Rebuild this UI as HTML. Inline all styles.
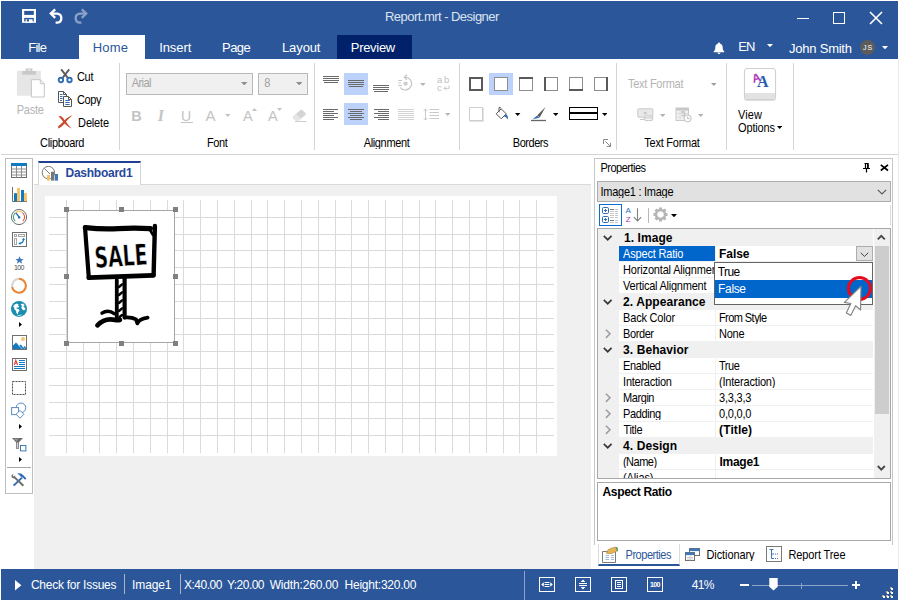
<!DOCTYPE html>
<html lang="en">
<head>
<meta charset="utf-8">
<title>Report.mrt - Designer</title>
<style>
*{box-sizing:border-box;margin:0;padding:0}
html,body{width:899px;height:601px;overflow:hidden;background:#fff}
body{position:relative;font-family:"Liberation Sans",sans-serif;font-size:11px;color:#000}
.abs,.abs-all *{position:absolute}
#app{position:absolute;left:0;top:0;width:899px;height:601px;overflow:hidden;background:#fff}
#app div,#app span,#app svg{position:absolute}
.t{white-space:nowrap;line-height:1}
/* title */
#title{left:1px;top:1px;width:897px;height:58px;background:#2b579a}
.tt{color:#fff;font-size:13px}
.tab{color:#fff;font-size:13px}
/* ribbon */
#ribbon{left:1px;top:59px;width:897px;height:95px;background:#fff}
.rl{font-size:11px;color:#000}
.dis{color:#ababab}
.sep{width:1px;background:#d2d2d2;top:63px;height:87px}
.hl{background:#c2d5f2}
/* workspace */
#work{left:1px;top:155px;width:897px;height:414px;background:#fff}
/* status */
#status{left:1px;top:569px;width:897px;height:31px;background:#2b579a}
.st{color:#fff;font-size:13px}
</style>
</head>
<body>
<div id="app">

<!-- ===== TITLE BAR ===== -->
<div id="title"></div>
<svg style="left:22px;top:9px" width="14" height="14" viewBox="0 0 14 14" ><rect width="14" height="13.8" fill="#fff"/><rect x="2.2" y="1.9" width="9.6" height="4" fill="#2b579a"/><rect x="2.2" y="8.9" width="9.6" height="3.5" fill="#2b579a"/><rect x="3.6" y="10.3" width="7" height="3.5" fill="#fff"/><rect x="4.8" y="10.3" width="2.2" height="2.2" fill="#2b579a"/></svg>
<svg style="left:48px;top:8px" width="16" height="16" viewBox="0 0 16 16" ><g fill="none" stroke="#fff" stroke-width="2.3"><path d="M7.2 1.4L2.8 5.6L7.2 9.8"/><path d="M3.4 5.6H9.4A4.6 4.6 0 0 1 9.4 14.7H7.6"/></g></svg>
<svg style="left:73px;top:8px" width="16" height="16" viewBox="0 0 16 16" ><g fill="none" stroke="#8ba1c8" stroke-width="2.3"><path d="M8.8 1.4L13.2 5.6L8.8 9.8"/><path d="M12.6 5.6H6.6A4.6 4.6 0 0 0 6.6 14.7H8.4"/></g></svg>
<span class="t " style="left:385.00px;top:10px;font-size:13px;letter-spacing:-0.534px;color:#dde3ee">Report.mrt - Designer</span>
<div style="left:797px;top:18px;width:12px;height:1px;background:#fff"></div>
<div style="left:833px;top:12px;width:12px;height:12px;border:1px solid #fff"></div>
<svg style="left:869px;top:11px" width="14" height="14" viewBox="0 0 14 14" ><path d="M1 1L13 13M13 1L1 13" stroke="#fff" stroke-width="1.6" fill="none"/></svg>
<span class="t " style="left:28.20px;top:41px;font-size:13px;letter-spacing:-0.718px;color:#fff">File</span>
<div style="left:79px;top:35px;width:66px;height:25px;background:#fff"></div>
<span class="t " style="left:92.80px;top:41px;font-size:13px;letter-spacing:0.171px;color:#2b579a">Home</span>
<span class="t " style="left:159.20px;top:41px;font-size:13px;letter-spacing:-0.083px;color:#fff">Insert</span>
<span class="t " style="left:222.00px;top:41px;font-size:13px;letter-spacing:-0.525px;color:#fff">Page</span>
<span class="t " style="left:282.00px;top:41px;font-size:13px;letter-spacing:-0.109px;color:#fff">Layout</span>
<div style="left:337px;top:35px;width:75px;height:24px;background:#01226a"></div>
<span class="t " style="left:350.80px;top:41px;font-size:13px;letter-spacing:-0.308px;color:#fff">Preview</span>
<svg style="left:713px;top:42px" width="12" height="13" viewBox="0 0 12 13" ><path fill="#fff" d="M6 0.6C6.7 0.6 7 1.1 7 1.6C9 2.2 9.7 3.8 9.7 5.6C9.7 7.6 10.3 8.8 11.3 9.6V10.2H0.7V9.6C1.7 8.8 2.3 7.6 2.3 5.6C2.3 3.8 3 2.2 5 1.6C5 1.1 5.3 0.6 6 0.6Z M4.6 10.8H7.4C7.4 11.6 6.8 12.1 6 12.1C5.2 12.1 4.6 11.6 4.6 10.8Z"/></svg>
<span class="t " style="left:738.30px;top:40px;font-size:13px;letter-spacing:-0.862px;color:#fff">EN</span>
<svg style="left:767px;top:44px" width="6" height="3.2" viewBox="0 0 6 3.2" ><path d="M0 0H6 L3 3.2Z" fill="#fff"/></svg>
<span class="t " style="left:789.10px;top:42px;font-size:13px;letter-spacing:-0.239px;color:#fff">John Smith</span>
<div style="left:860px;top:40px;width:15.2px;height:15.2px;background:#5c5c5c;border-radius:50%"></div>
<span class="t " style="left:862.90px;top:44px;font-size:7px;letter-spacing:1.228px;color:#fff">JS</span>
<svg style="left:881.5px;top:45.8px" width="6" height="3.4" viewBox="0 0 6 3.4" ><path d="M0 0H6 L3 3.4Z" fill="#fff"/></svg>

<!-- ===== RIBBON ===== -->
<div id="ribbon"></div>
<div style="left:1px;top:154px;width:897px;height:1px;background:#d4d4d4"></div>
<div style="left:119px;top:63px;width:1px;height:87px;background:#d5d5d5"></div>
<div style="left:314px;top:63px;width:1px;height:87px;background:#d5d5d5"></div>
<div style="left:459px;top:63px;width:1px;height:87px;background:#d5d5d5"></div>
<div style="left:616px;top:63px;width:1px;height:87px;background:#d5d5d5"></div>
<div style="left:726px;top:63px;width:1px;height:87px;background:#d5d5d5"></div>
<div style="left:793px;top:63px;width:1px;height:87px;background:#d5d5d5"></div>
<svg style="left:16px;top:68px" width="30" height="30" viewBox="0 0 30 30" ><rect x="0.9" y="2.7" width="24" height="25.1" rx="1" fill="#e6e6e6"/><path d="M6.2 3H19.9V6.8H6.2Z M9.7 0.4H16.4V3H9.7Z" fill="#c9c9c9"/><rect x="11.8" y="1.3" width="2.5" height="1.7" fill="#e6e6e6"/><path d="M15.4 11.7H24.3L28.3 15.7V29H15.4Z" fill="#fff" stroke="#c6c6c6" stroke-width="1"/><path d="M24.3 11.7V15.7H28.3" fill="none" stroke="#c6c6c6"/></svg>
<span class="t " style="left:16.80px;top:104px;font-size:11px;letter-spacing:-0.285px;transform:scaleY(1.08);transform-origin:0 1.12px;color:#b4b4b4">Paste</span>
<svg style="left:57px;top:68px" width="16" height="16" viewBox="0 0 16 16" ><path d="M4.2 1.4L11.4 10.6M12.2 1.4L5 10.6" stroke="#5c5c5c" stroke-width="1.9" fill="none"/><circle cx="3.9" cy="12" r="2.2" fill="#fff" stroke="#2f6db5" stroke-width="1.9"/><circle cx="12.5" cy="12" r="2.2" fill="#fff" stroke="#2f6db5" stroke-width="1.9"/></svg>
<span class="t " style="left:76.90px;top:71px;font-size:11px;letter-spacing:-0.263px;transform:scaleY(1.08);transform-origin:0 1.12px;">Cut</span>
<svg style="left:57px;top:90px" width="16" height="18" viewBox="0 0 16 18" ><path d="M1.5 1.5H6.5L9.5 4.5V12.5H1.5Z" fill="#fff" stroke="#555" stroke-width="1"/><path d="M6.5 1.5V4.5H9.5" fill="none" stroke="#555"/><path d="M3 4.5H5.5M3 6.5H5.5M3 8.5H5.5M3 10.5H5" stroke="#2f6db5" stroke-width="1"/><path d="M6.5 6.5H11.5L14.5 9.5V16.5H6.5Z" fill="#fff" stroke="#555" stroke-width="1"/><path d="M11.5 6.5V9.5H14.5" fill="none" stroke="#555"/><path d="M8.3 10.5H12.7M8.3 12.5H12.7M8.3 14.5H12.7" stroke="#2f6db5" stroke-width="1"/></svg>
<span class="t " style="left:76.90px;top:94px;font-size:11px;letter-spacing:-0.329px;transform:scaleY(1.08);transform-origin:0 1.12px;">Copy</span>
<svg style="left:57px;top:114px" width="17" height="16" viewBox="0 0 17 16" ><path d="M1.6 2.6C3.2 1.2 5 2.2 7.6 6.2C10.4 3.4 13 1.8 15.6 1.2C12.8 3.4 10.6 5.6 9 7.8C10.6 10.2 12.4 12.4 14.6 14.6C11.8 13.2 9.6 11.4 7.6 9.4C5.8 11.6 3.8 13.4 1.4 14.4C0.8 13.2 1 12.4 1.8 11.8C3.6 10.6 5 9.2 6.2 7.8C4.8 5.8 3.4 4 1.6 2.6Z" fill="#c9492c"/></svg>
<span class="t " style="left:78.10px;top:117px;font-size:11px;letter-spacing:-0.159px;transform:scaleY(1.08);transform-origin:0 1.12px;">Delete</span>
<span class="t " style="left:40.10px;top:137px;font-size:11px;letter-spacing:-0.337px;transform:scaleY(1.08);transform-origin:0 1.12px;">Clipboard</span>
<div style="left:126px;top:73px;width:127px;height:22px;background:#f0f0f0;border:1px solid #b9b9b9"></div>
<span class="t " style="left:131.70px;top:77px;font-size:11px;letter-spacing:-0.554px;transform:scaleY(1.08);transform-origin:0 1.12px;color:#a2a2a2">Arial</span>
<svg style="left:241px;top:82px" width="6.5" height="3.4" viewBox="0 0 6.5 3.4" ><path d="M0 0H6.5 L3.25 3.4Z" fill="#8e8e8e"/></svg>
<div style="left:258.4px;top:73px;width:49.2px;height:22px;background:#f0f0f0;border:1px solid #b9b9b9"></div>
<span class="t " style="left:264.30px;top:77px;font-size:11px;letter-spacing:0.000px;transform:scaleY(1.08);transform-origin:0 1.12px;color:#a2a2a2">8</span>
<svg style="left:295.7px;top:82px" width="6.5" height="3.4" viewBox="0 0 6.5 3.4" ><path d="M0 0H6.5 L3.25 3.4Z" fill="#8e8e8e"/></svg>
<span class="t " style="left:131.30px;top:109px;font-size:14.5px;letter-spacing:0.000px;color:#c3c3c3;font-weight:bold">B</span>
<span class="t " style="left:157.70px;top:108px;font-size:16px;letter-spacing:0.000px;color:#c3c3c3;font-style:italic;font-weight:bold;font-family:'Liberation Serif',serif">I</span>
<span class="t " style="left:181.00px;top:109px;font-size:14px;letter-spacing:0.000px;color:#c3c3c3">U</span>
<div style="left:181px;top:122px;width:11.5px;height:1px;background:#c3c3c3"></div>
<span class="t " style="left:205.50px;top:108px;font-size:15px;letter-spacing:0.000px;color:#c3c3c3">A</span>
<svg style="left:225px;top:113.6px" width="5.4" height="3" viewBox="0 0 5.4 3" ><path d="M0 0H5.4 L2.7 3Z" fill="#c3c3c3"/></svg>
<span class="t " style="left:243.00px;top:109px;font-size:14.5px;letter-spacing:0.000px;color:#c3c3c3">A</span>
<svg style="left:251.5px;top:108px" width="5" height="3" viewBox="0 0 5 3" ><path d="M0 3H5L2.5 0Z" fill="#c3c3c3"/></svg>
<span class="t " style="left:268.10px;top:109px;font-size:14.5px;letter-spacing:0.000px;color:#c3c3c3">A</span>
<svg style="left:276.5px;top:108.4px" width="5" height="3" viewBox="0 0 5 3" ><path d="M0 0H5L2.5 3Z" fill="#c3c3c3"/></svg>
<svg style="left:291px;top:108px" width="17" height="15" viewBox="0 0 17 15" ><path d="M2.2 8.6L9.6 1.8Q10.4 1.2 11.2 1.9L14.6 5.2Q15.2 6 14.5 6.8L8 12.6H4.6L2.2 10.2Q1.5 9.4 2.2 8.6Z" fill="#d4d4d4"/><path d="M2.2 8.6L5 6L10 10.8L8 12.6H4.6L2.2 10.2Q1.5 9.4 2.2 8.6Z" fill="#e6e6e6"/><path d="M4 13.5H15.5" stroke="#cfcfcf" stroke-width="1"/></svg>
<span class="t " style="left:206.90px;top:137px;font-size:11px;letter-spacing:-0.405px;transform:scaleY(1.08);transform-origin:0 1.12px;">Font</span>
<div style="left:344px;top:73px;width:24px;height:22px;background:#bdd2fb"></div>
<div style="left:344px;top:103px;width:24px;height:22px;background:#bdd2fb"></div>
<svg style="left:323px;top:76px" width="16" height="8" viewBox="0 0 16 8" ><rect x="0" y="0" width="16" height="1" fill="#6a6a6a"/><rect x="0" y="2" width="16" height="1" fill="#6a6a6a"/><rect x="0" y="4" width="16" height="1" fill="#6a6a6a"/><rect x="1" y="6" width="14" height="1" fill="#6a6a6a"/></svg>
<svg style="left:348px;top:80px" width="16" height="8" viewBox="0 0 16 8" ><rect x="0" y="0" width="16" height="1" fill="#6a6a6a"/><rect x="0" y="2" width="16" height="1" fill="#6a6a6a"/><rect x="0" y="4" width="16" height="1" fill="#6a6a6a"/><rect x="1" y="6" width="14" height="1" fill="#6a6a6a"/></svg>
<svg style="left:373px;top:85px" width="16" height="8" viewBox="0 0 16 8" ><rect x="0" y="0" width="16" height="1" fill="#6a6a6a"/><rect x="0" y="2" width="16" height="1" fill="#6a6a6a"/><rect x="0" y="4" width="16" height="1" fill="#6a6a6a"/><rect x="1" y="6" width="14" height="1" fill="#6a6a6a"/></svg>
<svg style="left:323px;top:109px" width="16" height="12" viewBox="0 0 16 12" ><rect x="0" y="0" width="15" height="1" fill="#6a6a6a"/><rect x="0" y="2" width="11" height="1" fill="#6a6a6a"/><rect x="0" y="4" width="15" height="1" fill="#6a6a6a"/><rect x="0" y="6" width="11" height="1" fill="#6a6a6a"/><rect x="0" y="8" width="15" height="1" fill="#6a6a6a"/><rect x="0" y="10" width="11" height="1" fill="#6a6a6a"/></svg>
<svg style="left:348px;top:109px" width="16" height="12" viewBox="0 0 16 12" ><rect x="0" y="0" width="16" height="1" fill="#6a6a6a"/><rect x="2" y="2" width="12" height="1" fill="#6a6a6a"/><rect x="0" y="4" width="16" height="1" fill="#6a6a6a"/><rect x="2" y="6" width="12" height="1" fill="#6a6a6a"/><rect x="0" y="8" width="16" height="1" fill="#6a6a6a"/><rect x="2" y="10" width="12" height="1" fill="#6a6a6a"/></svg>
<svg style="left:373px;top:109px" width="16" height="12" viewBox="0 0 16 12" ><rect x="1" y="0" width="15" height="1" fill="#6a6a6a"/><rect x="5" y="2" width="11" height="1" fill="#6a6a6a"/><rect x="1" y="4" width="15" height="1" fill="#6a6a6a"/><rect x="5" y="6" width="11" height="1" fill="#6a6a6a"/><rect x="1" y="8" width="15" height="1" fill="#6a6a6a"/><rect x="5" y="10" width="11" height="1" fill="#6a6a6a"/></svg>
<svg style="left:398px;top:109px" width="16" height="12" viewBox="0 0 16 12" ><rect x="0" y="0" width="16" height="1" fill="#d3d3d3"/><rect x="0" y="2" width="16" height="1" fill="#d3d3d3"/><rect x="0" y="4" width="16" height="1" fill="#d3d3d3"/><rect x="0" y="6" width="16" height="1" fill="#d3d3d3"/><rect x="0" y="8" width="16" height="1" fill="#d3d3d3"/><rect x="0" y="10" width="16" height="1" fill="#d3d3d3"/></svg>
<svg style="left:397px;top:74px" width="16" height="18" viewBox="0 0 16 18" ><g fill="none" stroke="#c6c6c6" stroke-width="1.2"><path d="M7.6 3.2A6.4 6.4 0 1 1 3 13.4"/><path d="M10 0.8L7.2 3.2L10 5.8"/><path d="M1.2 6.5H5M1.2 9H4M1.2 11.5H5" stroke-width="1"/></g><circle cx="8.6" cy="9.6" r="2.2" fill="#cfcfcf"/></svg>
<svg style="left:420px;top:83.3px" width="5.6" height="3" viewBox="0 0 5.6 3" ><path d="M0 0H5.6 L2.8 3Z" fill="#b5b5b5"/></svg>
<span class="t " style="left:437.10px;top:75px;font-size:9.5px;letter-spacing:0.000px;color:#c0c0c0">a</span>
<span class="t " style="left:444.10px;top:75px;font-size:9.5px;letter-spacing:0.000px;color:#c0c0c0">b</span>
<span class="t " style="left:437.10px;top:83px;font-size:9.5px;letter-spacing:0.000px;color:#c0c0c0">c</span>
<svg style="left:442.5px;top:84.5px" width="7" height="6" viewBox="0 0 7 6" ><path d="M6 0.5V3.4H1.2M3 1.4L1 3.4L3 5.4" fill="none" stroke="#c0c0c0" stroke-width="0.9"/></svg>
<svg style="left:423px;top:108px" width="17" height="13" viewBox="0 0 17 13" ><g stroke="#c9c9c9" fill="none" stroke-width="1"><path d="M2.5 1.2V11.8M0.6 3L2.5 1L4.4 3M0.6 10L2.5 12L4.4 10"/><path d="M6.5 1.5H16M6.5 4.5H16M6.5 7.5H16M6.5 10.5H16"/></g></svg>
<svg style="left:445px;top:113px" width="5.4" height="3" viewBox="0 0 5.4 3" ><path d="M0 0H5.4 L2.7 3Z" fill="#b5b5b5"/></svg>
<span class="t " style="left:363.70px;top:137px;font-size:11px;letter-spacing:-0.353px;transform:scaleY(1.08);transform-origin:0 1.12px;">Alignment</span>
<div style="left:489px;top:73px;width:23.5px;height:22px;background:#bdd2fb"></div>
<div style="left:469px;top:77px;width:14px;height:14px;border:1px solid #8e8e8e;background:#fff"></div><div style="left:469px;top:77px;width:14px;height:2px;background:#5a5a5a"></div><div style="left:469px;top:89px;width:14px;height:2px;background:#5a5a5a"></div><div style="left:469px;top:77px;width:2px;height:14px;background:#5a5a5a"></div><div style="left:481px;top:77px;width:2px;height:14px;background:#5a5a5a"></div>
<div style="left:494px;top:77px;width:14px;height:14px;border:1px solid #8e8e8e;background:#fff"></div>
<div style="left:519px;top:77px;width:14px;height:14px;border:1px solid #8e8e8e;background:#fff"></div><div style="left:519px;top:77px;width:14px;height:2px;background:#5a5a5a"></div>
<div style="left:544px;top:77px;width:14px;height:14px;border:1px solid #8e8e8e;background:#fff"></div><div style="left:544px;top:77px;width:2px;height:14px;background:#5a5a5a"></div>
<div style="left:569px;top:77px;width:14px;height:14px;border:1px solid #8e8e8e;background:#fff"></div><div style="left:569px;top:89px;width:14px;height:2px;background:#5a5a5a"></div>
<div style="left:594px;top:77px;width:14px;height:14px;border:1px solid #8e8e8e;background:#fff"></div><div style="left:606px;top:77px;width:2px;height:14px;background:#5a5a5a"></div>
<div style="left:469px;top:107px;width:14px;height:14px;border:1px solid #cfcfcf;background:#fff;box-shadow:1px 1px 0 #e4e4e4"></div>
<svg style="left:494px;top:106px" width="16" height="16" viewBox="0 0 16 16" ><path d="M5 1.6V6.2M5 1.6Q6.4 0.6 7 2.4M2.2 7.8L7.2 2.8L12.2 7.8L7.2 12.8Z" fill="#fff" stroke="#555" stroke-width="1"/><path d="M12.4 8.2Q14.8 10.6 13.6 13.4Q12.8 11 10 10.6Z" fill="#2f6db5"/></svg>
<svg style="left:515.4px;top:113.2px" width="5.4" height="3" viewBox="0 0 5.4 3" ><path d="M0 0H5.4 L2.7 3Z" fill="#000"/></svg>
<svg style="left:530px;top:106px" width="18" height="16" viewBox="0 0 18 16" ><path d="M1 14.5H16" stroke="#666" stroke-width="1.3"/><path d="M15.5 1L7.4 9.2L9.6 11.4Z" fill="#555"/><path d="M7.2 9.6L2.6 13.2L9.4 11.8Z" fill="#2f6db5"/></svg>
<svg style="left:552.6px;top:113.2px" width="5.4" height="3" viewBox="0 0 5.4 3" ><path d="M0 0H5.4 L2.7 3Z" fill="#000"/></svg>
<div style="left:569px;top:107px;width:28.5px;height:12.5px;border:1px solid #000;background:#fff"></div>
<div style="left:569px;top:112.4px;width:28.5px;height:1.6px;background:#000"></div>
<svg style="left:601.6px;top:113.2px" width="5.4" height="3" viewBox="0 0 5.4 3" ><path d="M0 0H5.4 L2.7 3Z" fill="#000"/></svg>
<span class="t " style="left:512.80px;top:137px;font-size:11px;letter-spacing:-0.472px;transform:scaleY(1.08);transform-origin:0 1.12px;">Borders</span>
<svg style="left:603px;top:138.5px" width="9" height="9" viewBox="0 0 9 9" ><path d="M0.5 5V0.5H5" fill="none" stroke="#8a8a8a"/><path d="M2.5 2.5L7.5 7.5M7.5 3.8V7.5H3.8" fill="none" stroke="#8a8a8a"/></svg>
<span class="t " style="left:627.90px;top:78px;font-size:11px;letter-spacing:-0.248px;transform:scaleY(1.08);transform-origin:0 1.12px;color:#b4b4b4">Text Format</span>
<svg style="left:710.7px;top:83.3px" width="5.6" height="3" viewBox="0 0 5.6 3" ><path d="M0 0H5.6 L2.8 3Z" fill="#9e9e9e"/></svg>
<svg style="left:637px;top:108px" width="18" height="14" viewBox="0 0 18 14" ><rect x="0.8" y="0.8" width="15" height="8.4" rx="1" fill="#e9e9e9" stroke="#c8c8c8"/><circle cx="8.2" cy="5" r="1.6" fill="#c8c8c8"/><ellipse cx="11.5" cy="9.2" rx="4.6" ry="1.5" fill="#f3f3f3" stroke="#c8c8c8"/><ellipse cx="11.5" cy="11.2" rx="4.6" ry="1.5" fill="#f3f3f3" stroke="#c8c8c8"/><path d="M3 11.5H7" stroke="#c8c8c8"/></svg>
<svg style="left:660px;top:113.6px" width="5.4" height="3" viewBox="0 0 5.4 3" ><path d="M0 0H5.4 L2.7 3Z" fill="#b0b0b0"/></svg>
<svg style="left:675px;top:106.5px" width="18" height="16" viewBox="0 0 18 16" ><rect x="1" y="1" width="12.5" height="12.5" fill="#f3f3f3" stroke="#c8c8c8"/><rect x="1" y="1" width="12.5" height="2.6" fill="#c8c8c8"/><path d="M1 6.5H13.5M1 10H13.5M5 3.5V13.5M9.4 3.5V13.5" stroke="#dcdcdc"/><circle cx="12.6" cy="11.4" r="3.6" fill="#fafafa" stroke="#c2c2c2"/><path d="M12.6 9.4V11.6H14.4" fill="none" stroke="#c2c2c2"/></svg>
<span class="t " style="left:681.00px;top:110px;font-size:8px;letter-spacing:0.000px;color:#b5b5b5">5</span>
<svg style="left:698px;top:113.6px" width="5.4" height="3" viewBox="0 0 5.4 3" ><path d="M0 0H5.4 L2.7 3Z" fill="#b0b0b0"/></svg>
<span class="t " style="left:644.30px;top:137px;font-size:11px;letter-spacing:-0.248px;transform:scaleY(1.08);transform-origin:0 1.12px;">Text Format</span>
<div style="left:744px;top:68px;width:32px;height:32px;background:#fff;border:1px solid #d0d0d0;border-radius:3px;box-shadow:0 1px 1px #dcdcdc;overflow:hidden"><div style="left:-1px;top:23.5px;width:32px;height:8px;background:#e2e2e2"></div></div>
<span class="t " style="left:751.80px;top:72px;font-size:12px;letter-spacing:0.000px;color:#b03bb8;font-weight:bold;transform:rotate(-16deg)">A</span>
<span class="t " style="left:757.10px;top:74px;font-size:16px;letter-spacing:0.000px;color:#2a5db0;font-weight:bold;font-family:'Liberation Serif',serif">A</span>
<span class="t " style="left:738.10px;top:109px;font-size:11px;letter-spacing:0.081px;transform:scaleY(1.08);transform-origin:0 1.12px;">View</span>
<span class="t " style="left:738.10px;top:122px;font-size:11px;letter-spacing:-0.170px;transform:scaleY(1.08);transform-origin:0 1.12px;">Options</span>
<svg style="left:777px;top:126.4px" width="5.2" height="3" viewBox="0 0 5.2 3" ><path d="M0 0H5.2 L2.6 3Z" fill="#000"/></svg>

<!-- ===== WORKSPACE ===== -->
<div id="work"></div>
<div style="left:5px;top:158px;width:28px;height:335.5px;background:#fff;border:1px solid #bdbdbd"></div>
<svg style="left:11px;top:163px" width="16" height="15" viewBox="0 0 16 15" ><rect x="0.5" y="0.5" width="15" height="14" fill="#fff" stroke="#6e6e6e"/><rect x="0" y="0" width="16" height="3" fill="#0f7bc0"/><path d="M0.5 6H15.5M0.5 9H15.5M0.5 12H15.5M5.5 3V14.5M10.5 3V14.5" stroke="#8e8e8e" stroke-width="1" fill="none"/></svg>
<svg style="left:11px;top:186px" width="17" height="17" viewBox="0 0 17 17" ><path d="M1.5 1V15.5H16" stroke="#6e6e6e" fill="none"/><rect x="3" y="7.2" width="3" height="8" fill="#0f7bc0"/><rect x="6" y="2" width="3" height="13.2" fill="#f7c46c"/><rect x="10" y="4" width="3" height="11.2" fill="#0f7bc0"/><rect x="13" y="7" width="3" height="8.2" fill="#f7c46c"/></svg>
<svg style="left:10px;top:208px" width="18" height="18" viewBox="0 0 18 18" ><circle cx="9" cy="9" r="7.6" fill="#fff" stroke="#6e6e6e" stroke-width="1"/><path d="M5.2 13.2A5.6 5.6 0 0 1 5.6 4.6" fill="none" stroke="#3aa17e" stroke-width="1.1"/><path d="M5.6 4.6A5.6 5.6 0 0 1 12.4 4.6" fill="none" stroke="#f2c14e" stroke-width="1.1"/><path d="M12.4 4.6A5.6 5.6 0 0 1 12.8 13.2" fill="none" stroke="#e8533a" stroke-width="1.1"/><path d="M6 4.8L9.4 9.6" stroke="#2f6db5" stroke-width="1.4"/><circle cx="9.2" cy="9.4" r="1.2" fill="#2f6db5"/></svg>
<svg style="left:12px;top:232px" width="15" height="15" viewBox="0 0 15 15" ><rect x="0.5" y="0.5" width="14" height="14" fill="#fff" stroke="#6e6e6e"/><rect x="2.5" y="2.5" width="2" height="2" fill="none" stroke="#a8a8a8"/><rect x="6.5" y="2.5" width="6" height="2" fill="none" stroke="#a8a8a8"/><rect x="2.5" y="6.5" width="2" height="6" fill="none" stroke="#a8a8a8"/><path d="M7 11.5Q11.6 11.5 11.6 6.6" fill="none" stroke="#0f7bc0" stroke-width="1.2"/><path d="M10 8L11.6 6L13.2 8Z M8.4 10L6.4 11.5L8.4 13Z" fill="#0f7bc0"/></svg>
<svg style="left:14.5px;top:256px" width="9" height="8" viewBox="0 0 9 8" ><path d="M4.5 0.3L5.7 3H8.6L6.3 4.9L7.2 7.7L4.5 6L1.8 7.7L2.7 4.9L0.4 3H3.3Z" fill="#3f78b9"/></svg>
<span class="t " style="left:13.90px;top:264px;font-size:7px;letter-spacing:-0.544px;color:#4a4a4a">100</span>
<svg style="left:10px;top:277px" width="18" height="18" viewBox="0 0 18 18" ><path d="M8.6 1.9A6.9 6.9 0 1 1 2.15 9.6" fill="none" stroke="#e8883a" stroke-width="2.1"/><path d="M2.15 9.6A6.9 6.9 0 0 1 8.6 1.9" fill="none" stroke="#d6d6d6" stroke-width="2.1"/></svg>
<svg style="left:10px;top:300px" width="18" height="18" viewBox="0 0 18 18" ><circle cx="9" cy="8.9" r="8" fill="#1a8cae"/><path d="M3 6.6Q4.4 4.2 6.8 3.6L8.6 4.4L8 5.6L9.4 6.2L8.4 7.6L6.8 7.4L6.4 8.6Q8.8 8.8 9.6 10.4L8.2 12.2L7.8 14.6L6.4 13L6 10.8L4.4 9.6L4.2 7.4Z" fill="#fff"/><path d="M10.6 4.2L13 3.6L14.8 5.6L13.4 6.2L14.6 7.6L15.6 9L14 10.4L12.4 9.4L11.2 7.4L12 6Z" fill="#fff"/><path d="M6.6 15.6Q9.6 14.4 12.6 14.8Q10.4 16.6 6.6 15.6Z" fill="#d6ebf2"/></svg>
<svg style="left:19px;top:322px" width="3" height="5" viewBox="0 0 3 5" ><path d="M0 0L3 2.5L0 5Z" fill="#000"/></svg>
<svg style="left:12px;top:335px" width="15" height="15" viewBox="0 0 15 15" ><rect x="0.5" y="0.5" width="14" height="14" fill="#fff" stroke="#6e6e6e"/><circle cx="11" cy="4" r="2" fill="#f7c46c"/><path d="M1 14V10.6L4 7.6L7.2 10.8L8.6 9.4L11.4 12.2L12.6 11L14 12.4V14Z" fill="#0f7bc0"/><path d="M6.2 9.8L10.4 14M10.4 11.2L13 13.8" stroke="#cfe3f2" stroke-width="0.8"/></svg>
<svg style="left:12px;top:358px" width="15" height="13" viewBox="0 0 15 13" ><rect x="0.5" y="0.5" width="14" height="12" fill="#fff" stroke="#6e6e6e" stroke-width="1"/><path d="M7 2.5H13M7 4.5H13M7 6.5H13M2 8.5H13M2 10.5H13" stroke="#0f7bc0" stroke-width="1"/><path d="M2.2 7L3.8 2.2L5.6 7M2.8 5.2H5" fill="none" stroke="#ee4040" stroke-width="1.1"/></svg>
<svg style="left:12px;top:381px" width="14" height="14" viewBox="0 0 14 14" ><rect x="0.5" y="0.5" width="13" height="13" fill="#fff" stroke="#4a4a4a" stroke-dasharray="2 1"/></svg>
<svg style="left:10px;top:402px" width="18" height="18" viewBox="0 0 18 18" ><g fill="#fff" stroke="#5a8bc4" stroke-width="1"><circle cx="11" cy="5.8" r="4.8"/><rect x="1.6" y="5.6" width="7" height="7"/><path d="M10 8.4L13.9 12.3L10 16.2L6.1 12.3Z"/></g></svg>
<svg style="left:19px;top:424px" width="3" height="5" viewBox="0 0 3 5" ><path d="M0 0L3 2.5L0 5Z" fill="#000"/></svg>
<svg style="left:11px;top:437px" width="17" height="16" viewBox="0 0 17 16" ><path d="M1 1H12L7.8 5.4V12H5.2V5.4Z" fill="#6e6e6e"/><path d="M6 5.6V11.4H7V5.6Z" fill="#d0d0d0"/><path d="M3 1.8H7L5.6 4.6Z" fill="#9a9a9a"/><rect x="9.5" y="8.5" width="5.4" height="5.4" fill="#fff" stroke="#3f78b9"/></svg>
<svg style="left:19px;top:457px" width="3" height="5" viewBox="0 0 3 5" ><path d="M0 0L3 2.5L0 5Z" fill="#000"/></svg>
<div style="left:7px;top:467px;width:24px;height:1px;background:#a6a6a6"></div>
<svg style="left:10px;top:472px" width="18" height="16" viewBox="0 0 18 16" ><path d="M3.6 13.6L12 5.6" stroke="#2f6db5" stroke-width="2"/><path d="M7 1.6Q11 0.6 13.6 3.4L16.4 6.6L15 7.8L12.8 5.6L10.6 4.6Q9.4 2.4 7 1.6Z" fill="#2f6db5"/><path d="M4.6 5.4L13.4 13.8" stroke="#6e6e6e" stroke-width="2"/><path d="M1.4 3.6Q1.2 6 3.4 6.4Q5.6 6.2 5.2 3.4L3.8 4.6L2.8 3.8L3.6 2.2Q2 2.2 1.4 3.6Z" fill="#6e6e6e"/></svg>
<div style="left:34px;top:184px;width:557px;height:385px;background:#f0f0f0;border-top:1px solid #dadada"></div>
<div style="left:38px;top:161px;width:103px;height:24px;background:#fff;border-left:1px solid #d4d4d4;border-right:1px solid #d4d4d4;border-top:2px solid #1f3f94"></div>
<svg style="left:41px;top:165px" width="18" height="17" viewBox="0 0 18 17" ><circle cx="7.4" cy="7.6" r="6.2" fill="#fff" stroke="#7a7a7a" stroke-width="1"/><path d="M3.4 3.4L9 9" stroke="#7a7a7a"/><rect x="6" y="10" width="3" height="5.6" fill="#f2c273"/><rect x="10" y="6.8" width="3.4" height="8.8" fill="#777"/><rect x="14" y="9" width="3" height="6.6" fill="#3f78b9"/></svg>
<span class="t " style="left:65.50px;top:167px;font-size:12px;letter-spacing:-0.251px;color:#27479b;font-weight:bold">Dashboard1</span>
<svg style="left:45px;top:196px" width="512" height="260" viewBox="0 0 512 260" ><rect width="512" height="260" fill="#fff"/><rect x="21" y="4" width="1" height="253" fill="#dadada"/><rect x="38" y="4" width="1" height="253" fill="#dadada"/><rect x="54" y="4" width="1" height="253" fill="#dadada"/><rect x="71" y="4" width="1" height="253" fill="#dadada"/><rect x="88" y="4" width="1" height="253" fill="#dadada"/><rect x="105" y="4" width="1" height="253" fill="#dadada"/><rect x="122" y="4" width="1" height="253" fill="#dadada"/><rect x="138" y="4" width="1" height="253" fill="#dadada"/><rect x="155" y="4" width="1" height="253" fill="#dadada"/><rect x="172" y="4" width="1" height="253" fill="#dadada"/><rect x="189" y="4" width="1" height="253" fill="#dadada"/><rect x="206" y="4" width="1" height="253" fill="#dadada"/><rect x="222" y="4" width="1" height="253" fill="#dadada"/><rect x="239" y="4" width="1" height="253" fill="#dadada"/><rect x="256" y="4" width="1" height="253" fill="#dadada"/><rect x="273" y="4" width="1" height="253" fill="#dadada"/><rect x="290" y="4" width="1" height="253" fill="#dadada"/><rect x="306" y="4" width="1" height="253" fill="#dadada"/><rect x="323" y="4" width="1" height="253" fill="#dadada"/><rect x="340" y="4" width="1" height="253" fill="#dadada"/><rect x="357" y="4" width="1" height="253" fill="#dadada"/><rect x="374" y="4" width="1" height="253" fill="#dadada"/><rect x="390" y="4" width="1" height="253" fill="#dadada"/><rect x="407" y="4" width="1" height="253" fill="#dadada"/><rect x="424" y="4" width="1" height="253" fill="#dadada"/><rect x="441" y="4" width="1" height="253" fill="#dadada"/><rect x="458" y="4" width="1" height="253" fill="#dadada"/><rect x="474" y="4" width="1" height="253" fill="#dadada"/><rect x="491" y="4" width="1" height="253" fill="#dadada"/><rect x="4" y="21" width="505" height="1" fill="#dadada"/><rect x="4" y="38" width="505" height="1" fill="#dadada"/><rect x="4" y="54" width="505" height="1" fill="#dadada"/><rect x="4" y="71" width="505" height="1" fill="#dadada"/><rect x="4" y="88" width="505" height="1" fill="#dadada"/><rect x="4" y="105" width="505" height="1" fill="#dadada"/><rect x="4" y="122" width="505" height="1" fill="#dadada"/><rect x="4" y="138" width="505" height="1" fill="#dadada"/><rect x="4" y="155" width="505" height="1" fill="#dadada"/><rect x="4" y="172" width="505" height="1" fill="#dadada"/><rect x="4" y="189" width="505" height="1" fill="#dadada"/><rect x="4" y="206" width="505" height="1" fill="#dadada"/><rect x="4" y="222" width="505" height="1" fill="#dadada"/><rect x="4" y="239" width="505" height="1" fill="#dadada"/></svg>
<svg style="left:66px;top:209px" width="110.5" height="135" viewBox="0 0 110.5 135" ><rect x="1.5" y="1.5" width="107" height="132" fill="#fff" stroke="#a6a6a6"/><g fill="none" stroke="#000" stroke-linecap="round" stroke-linejoin="round"><path d="M19.4 18.6Q36 20.4 52 19.6T84.4 19.6" stroke-width="5.2"/><path d="M19 18.4L22.8 68.6" stroke-width="4.2"/><path d="M22.8 68.6Q55 67.4 87.2 66.4" stroke-width="4.8"/><path d="M88.9 17L87.6 66.4" stroke-width="4.4"/><path d="M84 21L87 26" stroke-width="2.6"/><path d="M50.8 71V110" stroke-width="3.8"/><path d="M58.6 70V108.6" stroke-width="4.2"/><path d="M53 78L56 75.4M53 86L56 83.4M53 94L56 91.4M53 102L56 99.4M53.6 108L56 106" stroke-width="2.4"/><path d="M31.4 116.4Q38 109.4 47 110.6T53.4 110.4" stroke-width="4.6"/><path d="M36 104.2Q42 99.8 48.6 104.8" stroke-width="3.4"/><path d="M59 108.4Q66 108 70 110.4L71.4 114.4Q73 109.8 81.6 108.6" stroke-width="3.8"/></g><text x="28.6" y="57.2" font-family="'DejaVu Sans','Liberation Sans',sans-serif" font-weight="bold" font-size="29" textLength="53" lengthAdjust="spacingAndGlyphs" transform="rotate(-4 55 50)" fill="#000" stroke="#fff" stroke-width="0.5">SALE</text></svg>
<div style="left:64px;top:207px;width:5px;height:5px;background:#808080"></div>
<div style="left:64px;top:274px;width:5px;height:5px;background:#808080"></div>
<div style="left:64px;top:341px;width:5px;height:5px;background:#808080"></div>
<div style="left:119px;top:207px;width:5px;height:5px;background:#808080"></div>
<div style="left:119px;top:341px;width:5px;height:5px;background:#808080"></div>
<div style="left:173px;top:207px;width:5px;height:5px;background:#808080"></div>
<div style="left:173px;top:274px;width:5px;height:5px;background:#808080"></div>
<div style="left:173px;top:341px;width:5px;height:5px;background:#808080"></div>
<div style="left:898px;top:59px;width:1px;height:510px;background:#e9e9e9"></div>

<!-- ===== PROPERTIES ===== -->
<div style="left:594px;top:158px;width:299px;height:387px;background:#fff;border:1px solid #c6c6c6;border-bottom:none"></div>
<span class="t " style="left:600.50px;top:162px;font-size:11px;letter-spacing:-0.516px;transform:scaleY(1.08);transform-origin:0 1.12px;">Properties</span>
<svg style="left:862px;top:163px" width="9" height="10" viewBox="0 0 9 10" ><path d="M2.5 0.5H6.5M3.5 0.5V5.5M6 0.5V5.5M1 5.5H8M4.5 5.5V9.5" fill="none" stroke="#000" stroke-width="1.2"/><rect x="5" y="0.5" width="1.5" height="5" fill="#000"/></svg>
<svg style="left:880px;top:164.4px" width="9" height="8" viewBox="0 0 9 8" ><path d="M0.8 0.9L8 6.5M8 0.9L0.8 6.5" stroke="#000" stroke-width="1.7" fill="none"/></svg>
<div style="left:597px;top:181px;width:294px;height:21px;background:#e1e1e1;border:1px solid #adadad"></div>
<span class="t " style="left:600.50px;top:186px;font-size:11px;letter-spacing:-0.264px;transform:scaleY(1.08);transform-origin:0 1.12px;">Image1 : Image</span>
<svg style="left:877px;top:189px" width="10" height="6" viewBox="0 0 10 6" ><path d="M0.8 0.8L5 5L9.2 0.8" fill="none" stroke="#555" stroke-width="1.1"/></svg>
<div style="left:599px;top:204px;width:23px;height:22px;background:#fff;border:1px solid #0a6cd6"></div>
<svg style="left:602px;top:206px" width="17" height="18" viewBox="0 0 17 18" ><rect x="0.5" y="1.5" width="6" height="6" rx="1.2" fill="#fff" stroke="#2f6db5"/><path d="M2 4.5H5M3.5 3V6" stroke="#2f6db5" stroke-width="1"/><rect x="0.5" y="10.5" width="6" height="6" rx="1.2" fill="#fff" stroke="#2f6db5"/><path d="M2 13.5H5M3.5 12V15" stroke="#2f6db5" stroke-width="1"/><rect x="8" y="3" width="4" height="1" fill="#7a7a7a"/><rect x="13" y="3" width="3" height="1" fill="#c4c4c4"/><rect x="8" y="5" width="4" height="1" fill="#c8c8c8"/><rect x="13" y="5" width="3" height="1" fill="#c8c8c8"/><rect x="8" y="7" width="4" height="1" fill="#c8c8c8"/><rect x="13" y="7" width="3" height="1" fill="#c8c8c8"/><rect x="8" y="9" width="4" height="1" fill="#c8c8c8"/><rect x="13" y="9" width="3" height="1" fill="#c8c8c8"/><rect x="8" y="11" width="4" height="1" fill="#c8c8c8"/><rect x="13" y="11" width="3" height="1" fill="#c8c8c8"/><rect x="8" y="14" width="4" height="1" fill="#7a7a7a"/><rect x="13" y="14" width="3" height="1" fill="#c4c4c4"/><rect x="8" y="16" width="4" height="1" fill="#c8c8c8"/><rect x="13" y="16" width="3" height="1" fill="#c8c8c8"/></svg>
<span class="t " style="left:625.50px;top:207px;font-size:8px;letter-spacing:0.000px;color:#2f6db5">A</span>
<span class="t " style="left:625.70px;top:216px;font-size:8px;letter-spacing:0.000px;color:#a040b0">Z</span>
<svg style="left:633px;top:208px" width="9" height="14" viewBox="0 0 9 14" ><path d="M4.5 0.2V13M0.8 9.2L4.5 13L8.2 9.2" fill="none" stroke="#808080" stroke-width="1.1"/></svg>
<div style="left:648px;top:208px;width:1px;height:15px;background:#b8b8b8"></div>
<svg style="left:653.3px;top:207.3px" width="15" height="15" viewBox="0 0 15 15" ><g transform="translate(7.5 7.5)"><rect x="-1.5" y="-7" width="3" height="3" fill="#b6b6b6" transform="rotate(0)"/><rect x="-1.5" y="-7" width="3" height="3" fill="#b6b6b6" transform="rotate(45)"/><rect x="-1.5" y="-7" width="3" height="3" fill="#b6b6b6" transform="rotate(90)"/><rect x="-1.5" y="-7" width="3" height="3" fill="#b6b6b6" transform="rotate(135)"/><rect x="-1.5" y="-7" width="3" height="3" fill="#b6b6b6" transform="rotate(180)"/><rect x="-1.5" y="-7" width="3" height="3" fill="#b6b6b6" transform="rotate(225)"/><rect x="-1.5" y="-7" width="3" height="3" fill="#b6b6b6" transform="rotate(270)"/><rect x="-1.5" y="-7" width="3" height="3" fill="#b6b6b6" transform="rotate(315)"/><circle r="4.5" fill="none" stroke="#b6b6b6" stroke-width="2.4"/></g></svg>
<svg style="left:671px;top:214.2px" width="6" height="3.3" viewBox="0 0 6 3.3" ><path d="M0 0H6 L3 3.3Z" fill="#000"/></svg>
<div style="left:890px;top:205px;width:1px;height:20px;background:#dcdcdc"></div>
<div style="left:597px;top:228px;width:294px;height:250.5px;background:#fff;border:1px solid #a8a8a8"></div>
<div style="left:598px;top:229px;width:275px;height:248.5px;background:#f0f0f0;overflow:hidden"><svg style="left:5px;top:5.7px" width="10" height="6" viewBox="0 0 10 6" ><path d="M0.8 0.9L4.7 4.7L8.6 0.9" fill="none" stroke="#3a3a3a" stroke-width="1.7"/></svg>
<span class="t " style="left:26.00px;top:3px;font-size:12px;letter-spacing:0.067px;font-weight:bold">1. Image</span>
<div style="left:21px;top:17px;width:96px;height:15px;background:#0066cc"></div>
<div style="left:118px;top:17px;width:157px;height:15px;background:#fff"></div>
<div style="left:21px;top:17px;width:96px;height:15px;overflow:hidden"><span class="t " style="left:4.10px;top:2px;font-size:11px;letter-spacing:-0.180px;transform:scaleY(1.08);transform-origin:0 1.12px;color:#fff">Aspect Ratio</span></div>
<span class="t " style="left:121.10px;top:19px;font-size:12px;letter-spacing:-0.072px;font-weight:bold">False</span>
<div style="left:21px;top:33px;width:96px;height:15px;background:#fff"></div>
<div style="left:118px;top:33px;width:157px;height:15px;background:#fff"></div>
<div style="left:21px;top:33px;width:96px;height:15px;overflow:hidden"><span class="t " style="left:4.10px;top:2px;font-size:11px;letter-spacing:-0.173px;transform:scaleY(1.08);transform-origin:0 1.12px;color:#000">Horizontal Alignment</span></div>
<div style="left:21px;top:49px;width:96px;height:15px;background:#fff"></div>
<div style="left:118px;top:49px;width:157px;height:15px;background:#fff"></div>
<div style="left:21px;top:49px;width:96px;height:15px;overflow:hidden"><span class="t " style="left:4.10px;top:2px;font-size:11px;letter-spacing:-0.238px;transform:scaleY(1.08);transform-origin:0 1.12px;color:#000">Vertical Alignment</span></div>
<svg style="left:5px;top:69.7px" width="10" height="6" viewBox="0 0 10 6" ><path d="M0.8 0.9L4.7 4.7L8.6 0.9" fill="none" stroke="#3a3a3a" stroke-width="1.7"/></svg>
<span class="t " style="left:25.10px;top:67px;font-size:12px;letter-spacing:0.067px;font-weight:bold">2. Appearance</span>
<div style="left:21px;top:81px;width:96px;height:15px;background:#fff"></div>
<div style="left:118px;top:81px;width:157px;height:15px;background:#fff"></div>
<div style="left:21px;top:81px;width:96px;height:15px;overflow:hidden"><span class="t " style="left:4.10px;top:2px;font-size:11px;letter-spacing:-0.200px;transform:scaleY(1.08);transform-origin:0 1.12px;color:#000">Back Color</span></div>
<span class="t " style="left:120.90px;top:83px;font-size:11px;letter-spacing:-0.554px;transform:scaleY(1.08);transform-origin:0 1.12px;">From Style</span>
<div style="left:21px;top:97px;width:96px;height:15px;background:#fff"></div>
<div style="left:118px;top:97px;width:157px;height:15px;background:#fff"></div>
<div style="left:21px;top:97px;width:96px;height:15px;overflow:hidden"><span class="t " style="left:4.10px;top:2px;font-size:11px;letter-spacing:-0.426px;transform:scaleY(1.08);transform-origin:0 1.12px;color:#000">Border</span></div>
<span class="t " style="left:121.10px;top:99px;font-size:11px;letter-spacing:-0.299px;transform:scaleY(1.08);transform-origin:0 1.12px;">None</span>
<svg style="left:6.8px;top:100.3px" width="7" height="10" viewBox="0 0 7 10" ><path d="M0.9 0.7L5 4.8L0.9 8.9" fill="none" stroke="#9c9c9c" stroke-width="1.5"/></svg>
<svg style="left:5px;top:117.7px" width="10" height="6" viewBox="0 0 10 6" ><path d="M0.8 0.9L4.7 4.7L8.6 0.9" fill="none" stroke="#3a3a3a" stroke-width="1.7"/></svg>
<span class="t " style="left:25.10px;top:115px;font-size:12px;letter-spacing:0.070px;font-weight:bold">3. Behavior</span>
<div style="left:21px;top:129px;width:96px;height:15px;background:#fff"></div>
<div style="left:118px;top:129px;width:157px;height:15px;background:#fff"></div>
<div style="left:21px;top:129px;width:96px;height:15px;overflow:hidden"><span class="t " style="left:4.10px;top:2px;font-size:11px;letter-spacing:-0.413px;transform:scaleY(1.08);transform-origin:0 1.12px;color:#000">Enabled</span></div>
<span class="t " style="left:120.90px;top:131px;font-size:11px;letter-spacing:-0.373px;transform:scaleY(1.08);transform-origin:0 1.12px;">True</span>
<div style="left:21px;top:145px;width:96px;height:15px;background:#fff"></div>
<div style="left:118px;top:145px;width:157px;height:15px;background:#fff"></div>
<div style="left:21px;top:145px;width:96px;height:15px;overflow:hidden"><span class="t " style="left:4.10px;top:2px;font-size:11px;letter-spacing:-0.248px;transform:scaleY(1.08);transform-origin:0 1.12px;color:#000">Interaction</span></div>
<span class="t " style="left:120.90px;top:147px;font-size:11px;letter-spacing:-0.175px;transform:scaleY(1.08);transform-origin:0 1.12px;">(Interaction)</span>
<div style="left:21px;top:161px;width:96px;height:15px;background:#fff"></div>
<div style="left:118px;top:161px;width:157px;height:15px;background:#fff"></div>
<div style="left:21px;top:161px;width:96px;height:15px;overflow:hidden"><span class="t " style="left:4.10px;top:2px;font-size:11px;letter-spacing:-0.445px;transform:scaleY(1.08);transform-origin:0 1.12px;color:#000">Margin</span></div>
<span class="t " style="left:121.10px;top:163px;font-size:11px;letter-spacing:-0.207px;transform:scaleY(1.08);transform-origin:0 1.12px;">3,3,3,3</span>
<svg style="left:6.8px;top:164.3px" width="7" height="10" viewBox="0 0 7 10" ><path d="M0.9 0.7L5 4.8L0.9 8.9" fill="none" stroke="#9c9c9c" stroke-width="1.5"/></svg>
<div style="left:21px;top:177px;width:96px;height:15px;background:#fff"></div>
<div style="left:118px;top:177px;width:157px;height:15px;background:#fff"></div>
<div style="left:21px;top:177px;width:96px;height:15px;overflow:hidden"><span class="t " style="left:4.10px;top:2px;font-size:11px;letter-spacing:-0.396px;transform:scaleY(1.08);transform-origin:0 1.12px;color:#000">Padding</span></div>
<span class="t " style="left:121.10px;top:179px;font-size:11px;letter-spacing:-0.207px;transform:scaleY(1.08);transform-origin:0 1.12px;">0,0,0,0</span>
<svg style="left:6.8px;top:180.3px" width="7" height="10" viewBox="0 0 7 10" ><path d="M0.9 0.7L5 4.8L0.9 8.9" fill="none" stroke="#9c9c9c" stroke-width="1.5"/></svg>
<div style="left:21px;top:193px;width:96px;height:15px;background:#fff"></div>
<div style="left:118px;top:193px;width:157px;height:15px;background:#fff"></div>
<div style="left:21px;top:193px;width:96px;height:15px;overflow:hidden"><span class="t " style="left:4.50px;top:2px;font-size:11px;letter-spacing:-0.344px;transform:scaleY(1.08);transform-origin:0 1.12px;color:#000">Title</span></div>
<span class="t " style="left:121.10px;top:195px;font-size:12px;letter-spacing:0.091px;font-weight:bold">(Title)</span>
<svg style="left:6.8px;top:196.3px" width="7" height="10" viewBox="0 0 7 10" ><path d="M0.9 0.7L5 4.8L0.9 8.9" fill="none" stroke="#9c9c9c" stroke-width="1.5"/></svg>
<svg style="left:5px;top:213.7px" width="10" height="6" viewBox="0 0 10 6" ><path d="M0.8 0.9L4.7 4.7L8.6 0.9" fill="none" stroke="#3a3a3a" stroke-width="1.7"/></svg>
<span class="t " style="left:25.10px;top:211px;font-size:12px;letter-spacing:0.080px;font-weight:bold">4. Design</span>
<div style="left:21px;top:225px;width:96px;height:15px;background:#fff"></div>
<div style="left:118px;top:225px;width:157px;height:15px;background:#fff"></div>
<div style="left:21px;top:225px;width:96px;height:15px;overflow:hidden"><span class="t " style="left:3.90px;top:2px;font-size:11px;letter-spacing:-0.494px;transform:scaleY(1.08);transform-origin:0 1.12px;color:#000">(Name)</span></div>
<span class="t " style="left:121.50px;top:227px;font-size:12px;letter-spacing:-0.272px;font-weight:bold">Image1</span>
<div style="left:21px;top:241px;width:96px;height:15px;background:#fff"></div>
<div style="left:118px;top:241px;width:157px;height:15px;background:#fff"></div>
<div style="left:21px;top:241px;width:96px;height:15px;overflow:hidden"><span class="t " style="left:3.90px;top:2px;font-size:11px;letter-spacing:-0.095px;transform:scaleY(1.08);transform-origin:0 1.12px;color:#000">(Alias)</span></div></div>
<div style="left:873.5px;top:229px;width:16.5px;height:248.5px;background:#f0f0f0"></div>
<div style="left:874.5px;top:246px;width:14px;height:168px;background:#cdcdcd"></div>
<svg style="left:877.2px;top:234.3px" width="9" height="7" viewBox="0 0 9 7" ><path d="M0.8 5.4L4.3 1.8L7.8 5.4" fill="none" stroke="#484848" stroke-width="1.9"/></svg>
<svg style="left:877.2px;top:465px" width="9" height="7" viewBox="0 0 9 7" ><path d="M0.8 1L4.3 4.6L7.8 1" fill="none" stroke="#484848" stroke-width="1.9"/></svg>
<div style="left:856px;top:246px;width:16.5px;height:15px;background:#e1e1e1;border:1px solid #adadad"></div>
<svg style="left:860px;top:251.5px" width="9" height="6" viewBox="0 0 9 6" ><path d="M0.8 0.8L4.5 4.4L8.2 0.8" fill="none" stroke="#444" stroke-width="1"/></svg>
<div style="left:714px;top:262px;width:159px;height:42.5px;background:#fff;border:1px solid #646464"></div>
<div style="left:715px;top:280px;width:157px;height:17.5px;background:#0066cc"></div>
<span class="t " style="left:717.80px;top:266px;font-size:12px;letter-spacing:-0.578px;">True</span>
<span class="t " style="left:718.10px;top:283px;font-size:12px;letter-spacing:-0.361px;color:#fff">False</span>
<div style="left:846.6px;top:275.5px;width:25.8px;height:25.8px;border:3px solid #e60a1c;border-radius:50%"></div>
<svg style="left:841px;top:283px" width="26" height="36" viewBox="0 0 26 36" ><g transform="translate(1 1)"><path transform="translate(19 2.2) scale(1.08) translate(-19 -2.6)" d="M19 2.6L18.6 24.6L14 20.6L9.6 29.6L5.4 27.4L9.6 18.6L3.6 17.6Z" fill="#fff" stroke="#858585" stroke-width="1.1" stroke-linejoin="round"/></g></svg>
<div style="left:597px;top:482px;width:294px;height:59px;background:#fff;border:1px solid #a8a8a8"></div>
<span class="t " style="left:602.50px;top:486px;font-size:12px;letter-spacing:-0.342px;font-weight:bold">Aspect Ratio</span>
<div style="left:598px;top:544px;width:82px;height:22px;border-left:1px solid #dcdcdc;border-right:1px solid #dcdcdc;border-bottom:2px solid #2b579a"></div>
<svg style="left:601px;top:546px" width="20" height="18" viewBox="0 0 20 18" ><path d="M1.5 5.5H14.5V16.5H1.5Z" fill="#fff" stroke="#7a7a7a"/><path d="M4.5 9.5H8M4.5 11.5H8M4.5 13.5H8M10 9.5H13M10 11.5H13M10 13.5H13" stroke="#9bbbe0"/><path d="M5.4 7.2Q6 3.6 9.4 2.4L14.8 1L16 5L11.6 7.2Q8.6 8.2 5.4 7.2Z" fill="#e6b458" stroke="#a8823a" stroke-width="0.6"/><path d="M14.8 1L16.6 1.6L17 5.4L16 5Z" fill="#3c9a4a"/></svg>
<span class="t " style="left:625.50px;top:549px;font-size:11px;letter-spacing:-0.460px;transform:scaleY(1.08);transform-origin:0 1.12px;color:#2b579a">Properties</span>
<svg style="left:685px;top:547px" width="15" height="14" viewBox="0 0 15 14" ><rect x="4.5" y="1.5" width="10" height="7" fill="#fff" stroke="#6e6e6e"/><rect x="4.5" y="1.5" width="10" height="2.6" fill="#3f78b9"/><rect x="0.5" y="5.5" width="9" height="8" fill="#fff" stroke="#6e6e6e"/><rect x="0.5" y="5.5" width="9" height="2.6" fill="#3f78b9"/><path d="M2 10.5H8M2 12H8M5 8V13.5" stroke="#c4c4c4" stroke-width="0.8"/></svg>
<span class="t " style="left:706.50px;top:549px;font-size:11px;letter-spacing:-0.101px;transform:scaleY(1.08);transform-origin:0 1.12px;">Dictionary</span>
<svg style="left:766px;top:546px" width="16" height="16" viewBox="0 0 16 16" ><rect x="0.5" y="0.5" width="15" height="15" fill="#fff" stroke="#7a7a7a"/><path d="M3.5 3.5H7.5M5.5 3.5V12.5H8M5.5 8H8" fill="none" stroke="#3f78b9"/><path d="M9 8H12M9 12.5H12" stroke="#3f78b9" stroke-dasharray="1 1"/></svg>
<span class="t " style="left:788.50px;top:549px;font-size:11px;letter-spacing:-0.109px;transform:scaleY(1.08);transform-origin:0 1.12px;">Report Tree</span>

<!-- ===== STATUS BAR ===== -->
<div id="status"></div>
<svg style="left:14.5px;top:579.8px" width="7" height="11" viewBox="0 0 7 11" ><path d="M0 0L6.4 5.2L0 10.4Z" fill="#fff"/></svg>
<span class="t " style="left:30.90px;top:578px;font-size:12px;letter-spacing:-0.252px;transform:scaleY(1.085);transform-origin:0 1.41px;color:#fff">Check for Issues</span>
<div style="left:124px;top:574px;width:1px;height:19.5px;background:#aeb4c0"></div>
<span class="t " style="left:132.10px;top:578px;font-size:12px;letter-spacing:-0.126px;transform:scaleY(1.085);transform-origin:0 1.41px;color:#fff">Image1</span>
<div style="left:179.5px;top:574px;width:1px;height:19.5px;background:#aeb4c0"></div>
<span class="t " style="left:183.90px;top:578px;font-size:12px;letter-spacing:-0.463px;transform:scaleY(1.085);transform-origin:0 1.41px;color:#fff">X:40.00</span>
<span class="t " style="left:227.00px;top:578px;font-size:12px;letter-spacing:-0.536px;transform:scaleY(1.085);transform-origin:0 1.41px;color:#fff">Y:20.00</span>
<span class="t " style="left:269.70px;top:578px;font-size:12px;letter-spacing:-0.174px;transform:scaleY(1.085);transform-origin:0 1.41px;color:#fff">Width:260.00</span>
<span class="t " style="left:344.50px;top:578px;font-size:12px;letter-spacing:-0.228px;transform:scaleY(1.085);transform-origin:0 1.41px;color:#fff">Height:320.00</span>
<div style="left:524px;top:571px;width:1px;height:29px;background:#8ea3c9"></div>
<svg style="left:539px;top:577px" width="16" height="15" viewBox="0 0 16 15" ><rect x="0.5" y="0.5" width="15" height="14" fill="none" stroke="#fff"/><path d="M5.6 5.5H10.4M5.6 7.5H10.4M5.6 9.5H10.4" stroke="#fff"/><path d="M4.8 5.2L2.2 7.5L4.8 9.8Z M11.2 5.2L13.8 7.5L11.2 9.8Z" fill="#fff"/></svg>
<svg style="left:575px;top:577px" width="16" height="15" viewBox="0 0 16 15" ><rect x="0.5" y="0.5" width="15" height="14" fill="none" stroke="#fff"/><path d="M4 6.5H12M4 8.5H12" stroke="#fff"/><path d="M5.6 5L8 2.4L10.4 5Z M5.6 10L8 12.6L10.4 10Z" fill="#fff"/></svg>
<svg style="left:611px;top:577px" width="16" height="15" viewBox="0 0 16 15" ><rect x="0.5" y="0.5" width="15" height="14" fill="none" stroke="#fff"/><rect x="4.5" y="3.5" width="7" height="8" fill="none" stroke="#fff"/><path d="M6 5.5H10M6 7.5H10M6 9.5H10" stroke="#fff"/></svg>
<svg style="left:647px;top:577px" width="16" height="15" viewBox="0 0 16 15" ><rect x="0.5" y="0.5" width="15" height="14" fill="none" stroke="#fff"/></svg>
<span class="t " style="left:650.10px;top:581px;font-size:7px;letter-spacing:-0.644px;color:#fff;font-weight:bold">100</span>
<span class="t " style="left:691.80px;top:578px;font-size:12px;letter-spacing:-0.666px;transform:scaleY(1.085);transform-origin:0 1.41px;color:#fff">41%</span>
<div style="left:740px;top:584px;width:8.5px;height:2.2px;background:#fff"></div>
<div style="left:751.6px;top:585px;width:96.2px;height:1px;background:#8ea3c9"></div>
<div style="left:801px;top:582.5px;width:1px;height:6px;background:#8ea3c9"></div>
<svg style="left:769px;top:578px" width="9" height="12.5" viewBox="0 0 9 12.5" ><path d="M0.3 0H8.7V8.8L4.5 12.4L0.3 8.8Z" fill="#fff"/></svg>
<div style="left:851.8px;top:584px;width:8.6px;height:2.2px;background:#fff"></div>
<div style="left:855px;top:580.8px;width:2.2px;height:8.6px;background:#fff"></div>
<svg style="left:882px;top:587px" width="12" height="12" viewBox="0 0 12 12" ><rect x="8" y="0" width="2" height="2" fill="#b9ab97"/><rect x="9" y="1" width="2" height="2" fill="#fff"/><rect x="4" y="4" width="2" height="2" fill="#b9ab97"/><rect x="5" y="5" width="2" height="2" fill="#fff"/><rect x="8" y="4" width="2" height="2" fill="#b9ab97"/><rect x="9" y="5" width="2" height="2" fill="#fff"/><rect x="0" y="8" width="2" height="2" fill="#b9ab97"/><rect x="1" y="9" width="2" height="2" fill="#fff"/><rect x="4" y="8" width="2" height="2" fill="#b9ab97"/><rect x="5" y="9" width="2" height="2" fill="#fff"/><rect x="8" y="8" width="2" height="2" fill="#b9ab97"/><rect x="9" y="9" width="2" height="2" fill="#fff"/></svg>

</div>
</body>
</html>
